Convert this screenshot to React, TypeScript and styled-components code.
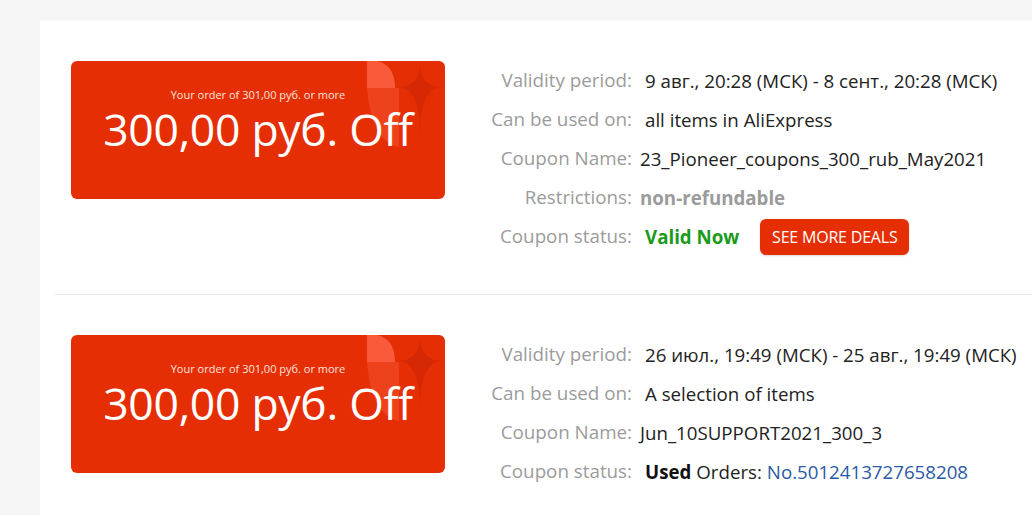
import React from "react";
import styled, { createGlobalStyle } from "styled-components";

const Global = createGlobalStyle`
  html, body { margin: 0; padding: 0; background: #f5f5f5; }
  body { font-family: "Open Sans", "Liberation Sans", sans-serif; overflow: hidden; }
`;

const Page = styled.div`
  width: 1032px;
  height: 515px;
  padding: 21px 0 0 40px;
  box-sizing: border-box;
  background: #f5f5f5;
  overflow: hidden;
`;

const Panel = styled.div`
  background: #fff;
  height: 600px;
  display: flex;
  flex-direction: column;
`;

const Entry = styled.div`
  display: flex;
  align-items: flex-start;
  padding: 40px 0 38px 31px;
`;

const Divider = styled.div`
  height: 1px;
  background: #e6e6e6;
  margin-left: 15px;
`;

const Card = styled.div`
  position: relative;
  width: 374px;
  height: 138px;
  flex: none;
  border-radius: 6px;
  background: #e62e05;
  color: #fff;
  display: flex;
  flex-direction: column;
  align-items: center;
  padding-top: 26px;
  box-sizing: border-box;
  overflow: hidden;
`;

const Deco = styled.svg`
  position: absolute;
  top: 0;
  right: 0;
`;

const Condition = styled.div`
  position: relative;
  font-size: 11px;
  line-height: 16px;
  color: #ffe3dc;
`;

const Amount = styled.div`
  position: relative;
  font-size: 44.5px;
  line-height: 52px;
  letter-spacing: -0.3px;
`;

const Info = styled.div`
  display: grid;
  grid-template-columns: 150px auto;
  column-gap: 8px;
  margin-left: 37px;
  font-size: 18.7px;
`;

const Label = styled.div`
  text-align: right;
  color: #9b9b9b;
  font-size: 18.8px;
  line-height: 39px;
  height: 39px;
  white-space: nowrap;
`;

const Value = styled.div<{ $indent?: boolean }>`
  display: flex;
  align-items: center;
  height: 39px;
  white-space: nowrap;
  color: #222;
  padding-left: ${(p) => (p.$indent ? "5px" : "0")};
`;

const Muted = styled.span`
  font-weight: 700;
  color: #9b9b9b;
`;

const Valid = styled.span`
  font-weight: 700;
  color: #1b9a1b;
`;

const Strong = styled.span`
  font-weight: 700;
  color: #111;
  margin-right: 5px;
`;

const Link = styled.span`
  color: #2b5aa6;
  margin-left: 5px;
`;

const Button = styled.button`
  margin-left: 21px;
  height: 36px;
  width: 149px;
  border: none;
  border-radius: 6px;
  background: #e62e05;
  color: #fff;
  font-family: "Open Sans", "Liberation Sans", sans-serif;
  font-size: 16px;
  letter-spacing: -0.2px;
  padding: 0;
  box-shadow: 0 1px 2px rgba(0, 0, 0, 0.15);
`;

function CouponCard() {
  return (
    <Card>
      <Deco width="80" height="90" viewBox="0 0 80 90">
        <path d="M2 0 H12 Q30 4 30 27 H2 Z" fill="#ff6a4e" opacity="0.75" />
        <path d="M2 27 H34 V86 Q6 80 2 27 Z" fill="#f4532f" opacity="0.55" />
        <path
          d="M55 2 Q55 26 78 26 Q55 26 55 72 Q55 26 32 26 Q55 26 55 2 Z"
          fill="#c92404"
          opacity="0.55"
        />
      </Deco>
      <Condition>Your order of 301,00 руб. or more</Condition>
      <Amount>300,00 руб. Off</Amount>
    </Card>
  );
}

export default function App() {
  return (
    <Page>
      <Global />
      <Panel>
        <Entry>
          <CouponCard />
          <Info>
            <Label>Validity period:</Label>
            <Value $indent>9 авг., 20:28 (МСК) - 8 сент., 20:28 (МСК)</Value>
            <Label>Can be used on:</Label>
            <Value $indent>all items in AliExpress</Value>
            <Label>Coupon Name:</Label>
            <Value>23_Pioneer_coupons_300_rub_May2021</Value>
            <Label>Restrictions:</Label>
            <Value>
              <Muted>non-refundable</Muted>
            </Value>
            <Label>Coupon status:</Label>
            <Value $indent>
              <Valid>Valid Now</Valid>
              <Button>SEE MORE DEALS</Button>
            </Value>
          </Info>
        </Entry>
        <Divider />
        <Entry>
          <CouponCard />
          <Info>
            <Label>Validity period:</Label>
            <Value $indent>26 июл., 19:49 (МСК) - 25 авг., 19:49 (МСК)</Value>
            <Label>Can be used on:</Label>
            <Value $indent>A selection of items</Value>
            <Label>Coupon Name:</Label>
            <Value>Jun_10SUPPORT2021_300_3</Value>
            <Label>Coupon status:</Label>
            <Value $indent>
              <Strong>Used</Strong>Orders:<Link>No.5012413727658208</Link>
            </Value>
          </Info>
        </Entry>
      </Panel>
    </Page>
  );
}
